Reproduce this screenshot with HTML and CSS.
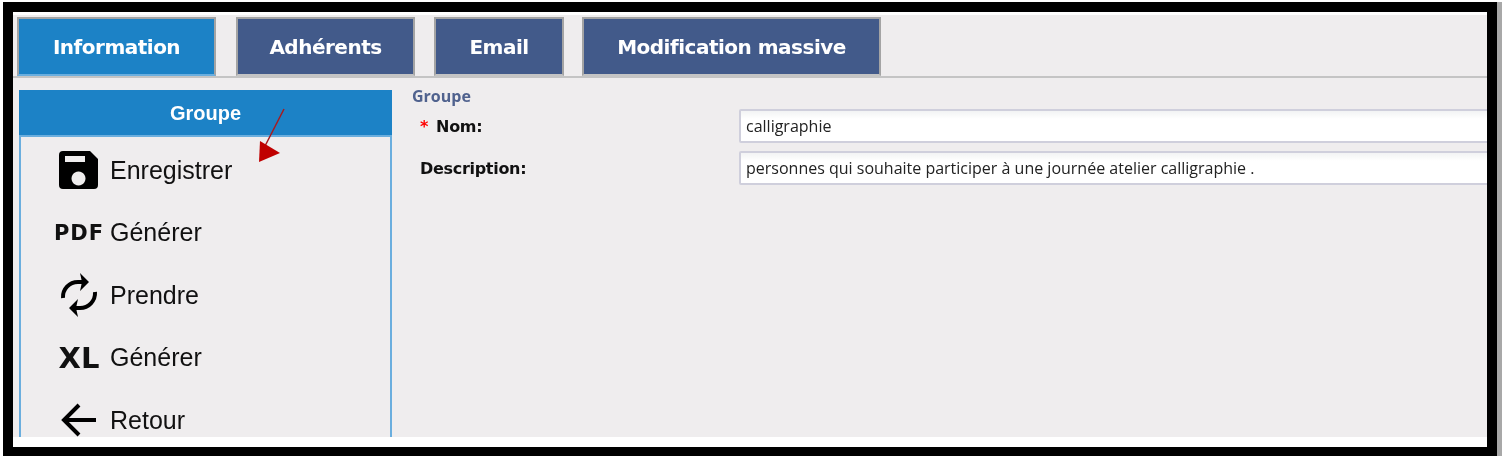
FILE: index.html
```html
<!DOCTYPE html>
<html lang="fr">
<head>
<meta charset="utf-8">
<title>Groupe</title>
<link rel="stylesheet" href="styles.css">
</head>
<body>
	<div class="frame">
		<div class="page">
			<nav class="tabs">
				<a class="tab tab_info active">Information</a>
				<a class="tab tab_members">Adhérents</a>
				<a class="tab tab_email">Email</a>
				<a class="tab tab_mass">Modification massive</a>
			</nav>

			<div class="main">
				<aside class="side">
					<h2 class="side_title">Groupe</h2>
					<ul class="menu">
						<li class="menu_item">
							<span class="menu_icon">
								<svg width="40" height="38" viewBox="0 0 40 38"><path fill="#000" fill-rule="evenodd" d="M4 0H31L39 8V34a4 4 0 0 1-4 4H4a4 4 0 0 1-4-4V4a4 4 0 0 1 4-4ZM6 5V11H26V5ZM19.500 20.500a7 7 0 1 0 .01 0Z"/></svg>
							</span>
							<span>Enregistrer</span>
						</li>
						<li class="menu_item">
							<span class="menu_icon menu_icon_text pdf">PDF</span>
							<span>Générer</span>
						</li>
						<li class="menu_item">
							<span class="menu_icon">
								<svg width="38" height="44" viewBox="0 0 38 44" fill="none" stroke="#000" stroke-width="4"><path d="M3 25A15 15 0 0 1 18 9H24"/><path d="M35 19A15 15 0 0 1 20 35H14"/><path fill="#000" stroke="none" d="M20 0L29 9L20 18L22 9Z"/><path fill="#000" stroke="none" d="M18 26L9 35L18 44L16 35Z"/></svg>
							</span>
							<span>Prendre</span>
						</li>
						<li class="menu_item">
							<span class="menu_icon menu_icon_text xl">XL</span>
							<span>Générer</span>
						</li>
						<li class="menu_item">
							<span class="menu_icon">
								<svg width="36" height="34" viewBox="0 0 36 34" fill="none" stroke="#000" stroke-width="4"><path d="M18 2L3 17L18 32"/><path d="M3 17H35"/></svg>
							</span>
							<span>Retour</span>
						</li>
					</ul>
					<svg class="pointer" width="40" height="58" viewBox="0 0 40 58"><path d="M31 1L11 40" fill="none" stroke="#a81a1e" stroke-width="1.500"/><path d="M7 33L27 45L6 54Z" fill="#c00000"/></svg>
				</aside>

				<section class="form">
					<div class="form_title">Groupe</div>
					<div class="row">
						<label class="row_label"><span class="star">*</span>Nom:</label>
						<input class="row_input" type="text" value="calligraphie">
					</div>
					<div class="row">
						<label class="row_label">Description:</label>
						<input class="row_input" type="text" value="personnes qui souhaite participer à une journée atelier calligraphie .">
					</div>
				</section>
			</div>
		</div>
	</div>
</body>
</html>
```

FILE: styles.css
```css
* {
	box-sizing: border-box;
}

html, body {
	margin: 0;
	padding: 0;
	height: 456px;
	background: #fff;
	overflow: hidden;
}

.frame {
	margin: 2px 5px 0 3px;
	height: 454px;
	border: 10px solid #000;
	border-bottom-width: 9px;
	box-shadow: 5px 0 0 #a8a8a8;
	background: #fff;
	padding: 3px 0 10px;
}

.page {
	height: 100%;
	background: #efedee;
	overflow: hidden;
	filter: blur(0.4px);
}

.tabs {
	display: flex;
	height: 63px;
	padding: 2px 0 0 4px;
	border-bottom: 2px solid #c4c4c4;
}

.tab {
	display: flex;
	align-items: center;
	justify-content: center;
	height: 59px;
	background: #425a8a;
	border: 2px solid #a4a4a4;
	border-bottom-color: #c4c4c4;
	color: #fff;
	font: bold 20px "DejaVu Sans", sans-serif;
	letter-spacing: -0.5px;
}

.tab.active {
	background: #1c82c6;
	border-color: #a4a4a4;
	border-bottom-color: #6aaede;
}

.tab_info { width: 199px; margin-right: 20px; }
.tab_members { width: 179px; margin-right: 19px; }
.tab_email { width: 130px; margin-right: 18px; }
.tab_mass { width: 299px; }

.main {
	display: flex;
	padding: 12px 0 0 6px;
}

.side {
	position: relative;
	flex: none;
	width: 373px;
	height: 400px;
	border: 2px solid #6aaede;
	border-top: 0;
}

.side_title {
	margin: 0 -2px;
	height: 47px;
	line-height: 47px;
	background: #1c82c6;
	border-bottom: 2px solid #6aaede;
	color: #fff;
	font: bold 20px/47px "Liberation Sans", sans-serif;
	text-align: center;
}

.menu {
	list-style: none;
	margin: 0;
	padding: 2px 0 0 32px;
}

.menu_item {
	display: flex;
	align-items: center;
	height: 62.500px;
	font: 25px "Liberation Sans", sans-serif;
	color: #111;
}

.menu_icon {
	display: flex;
	align-items: center;
	justify-content: center;
	width: 62px;
	margin-left: -5px;
	padding-right: 0;
}

.menu_icon_text {
	font-weight: bold;
	color: #111;
	font-family: "DejaVu Sans", sans-serif;
}

.pdf {
	font-size: 21px;
	letter-spacing: 1px;
}

.xl {
	font-size: 29px;
}

.pointer {
	position: absolute;
	left: 232px;
	top: 18px;
}

.form {
	flex: 1;
	min-width: 0;
	padding: 0 0 0 20px;
	margin-right: 0;
}

.form_title {
	height: 19px;
	color: #50628e;
	font: bold 16px/12px "Open Sans", sans-serif;
}

.row {
	display: flex;
	align-items: center;
	height: 34px;
	margin-bottom: 8px;
}

.row_label {
	flex: none;
	width: 327px;
	padding-left: 8px;
	color: #111;
	font: bold 16px "DejaVu Sans", sans-serif;
	letter-spacing: -0.3px;
}

.star {
	color: #f00;
	margin-right: 8px;
}

.row_input {
	flex: none;
	width: 800px;
	height: 34px;
	padding: 0 5px;
	border: 2px solid #cfcfdc;
	border-radius: 2px;
	background: linear-gradient(#f2f3f4, #fff 8px);
	color: #222;
	font: 16px "Open Sans", sans-serif;
}
```
